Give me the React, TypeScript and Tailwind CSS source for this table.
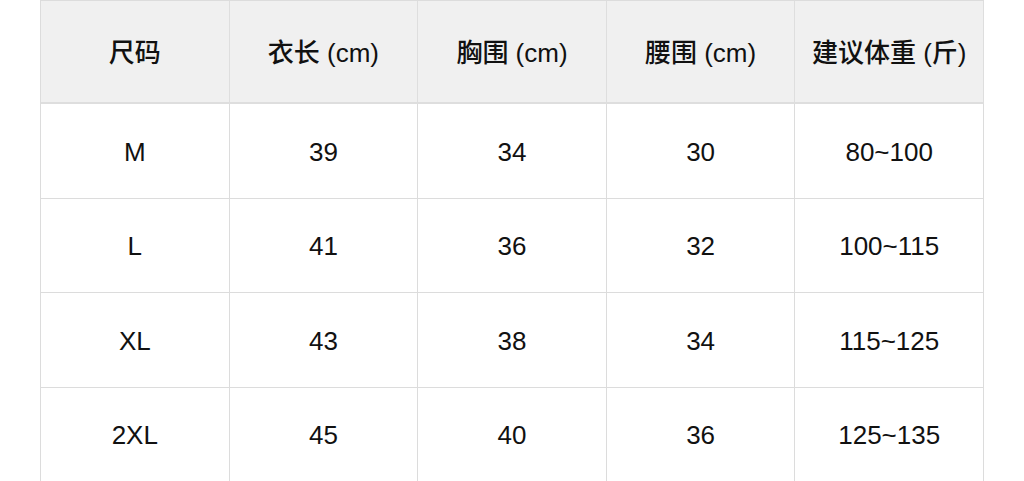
const headers = ["尺码", "衣长 (cm)", "胸围 (cm)", "腰围 (cm)", "建议体重 (斤)"];

const rows = [
  ["M", "39", "34", "30", "80~100"],
  ["L", "41", "36", "32", "100~115"],
  ["XL", "43", "38", "34", "115~125"],
  ["2XL", "45", "40", "36", "125~135"],
];

export default function App() {
  return (
    <div className="h-[481px] w-full overflow-hidden bg-white pl-[40px] font-['Liberation_Sans','Noto_Sans_CJK_SC',sans-serif] text-[26px] text-[#111]">
      <div className="w-[944px] border-l border-t border-[#dcdcdc]">
        <div className="grid h-[103px] grid-cols-5 bg-[#f0f0f0]">
          {headers.map((h) => (
            <div
              key={h}
              className="flex items-center justify-center border-b-2 border-r border-[#dedede] pt-[3px] font-medium"
            >
              {h}
            </div>
          ))}
        </div>
        {rows.map((r) => (
          <div key={r[0]} className="grid h-[94.5px] grid-cols-5">
            {r.map((c, i) => (
              <div
                key={i}
                className="flex items-center justify-center border-b border-r border-[#dcdcdc] pt-[3px]"
              >
                {c}
              </div>
            ))}
          </div>
        ))}
      </div>
    </div>
  );
}
